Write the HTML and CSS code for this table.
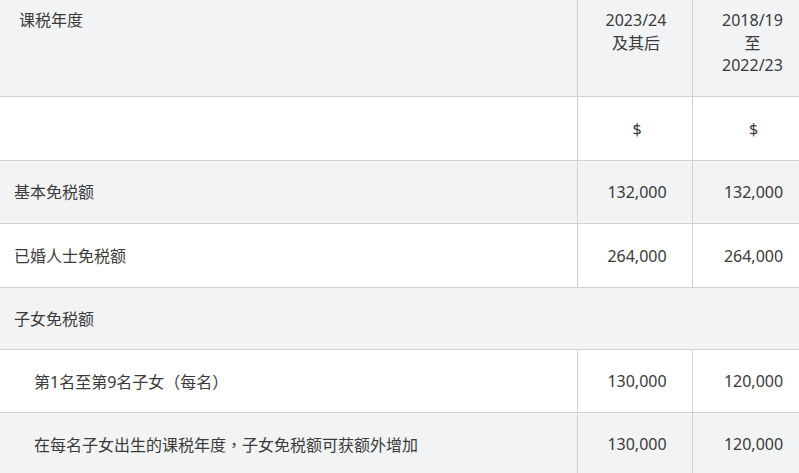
FILE: index.html
```html
<!DOCTYPE html>
<html lang="zh">
<head>
<meta charset="utf-8">
<link rel="stylesheet" href="styles.css">
</head>
<body>
<div class="table">
  <div class="row head grey">
    <div class="cell label head-label">课税年度</div>
    <div class="cell num top">2023/24<br>及其后</div>
    <div class="cell num top">2018/19<br>至<br>2022/23</div>
  </div>
  <div class="row r64">
    <div class="cell label"></div>
    <div class="cell num">$</div>
    <div class="cell num">$</div>
  </div>
  <div class="row r63 grey">
    <div class="cell label">基本免税额</div>
    <div class="cell num">132,000</div>
    <div class="cell num">132,000</div>
  </div>
  <div class="row r64">
    <div class="cell label">已婚人士免税额</div>
    <div class="cell num">264,000</div>
    <div class="cell num">264,000</div>
  </div>
  <div class="row r62 grey span">
    <div class="cell label">子女免税额</div>
  </div>
  <div class="row r63">
    <div class="cell label indent"><span>第1名至第9名子女<span class="punct" lang="zh-TW">（</span>每名<span class="punct" lang="zh-TW">）</span></span></div>
    <div class="cell num">130,000</div>
    <div class="cell num">120,000</div>
  </div>
  <div class="row r63 grey">
    <div class="cell label indent"><span>在每名子女出生的课税年度<span class="punct" lang="zh-TW">，</span>子女免税额可获额外增加</span></div>
    <div class="cell num">130,000</div>
    <div class="cell num">120,000</div>
  </div>
</div>
</body>
</html>
```
FILE: styles.css
```css
html, body {
  margin: 0;
  padding: 0;
  background: #ffffff;
  overflow: hidden;
}
body {
  font-family: "Noto Sans", "Noto Sans CJK SC", sans-serif;
  font-size: 16px;
  color: #3a3a3a;
}
.table {
  width: 810px;
}
.row {
  display: grid;
  grid-template-columns: 577px 115px 118px;
  border-bottom: 1px solid #d2d2d2;
  box-sizing: border-box;
  background: #ffffff;
}
.row.grey {
  background: #f2f3f5;
}
.row.head { height: 97px; }
.r64 { height: 64px; }
.r63 { height: 63px; }
.r62 { height: 62px; }
.row.span {
  grid-template-columns: 1fr;
}
.cell {
  display: flex;
  align-items: center;
  line-height: 22px;
}
.label {
  padding-left: 14px;
}
.indent {
  padding-left: 34px;
}
.punct {
  font-family: "Noto Sans CJK TC", "Noto Sans CJK SC", sans-serif;
}
.head-label {
  align-items: flex-start;
  padding-left: 19px;
  padding-top: 9px;
}
.num {
  border-left: 1px solid #d2d2d2;
  justify-content: center;
  text-align: center;
  padding-left: 4px;
}
.num.top {
  align-items: flex-start;
  padding-top: 9px;
  line-height: 22.5px;
  padding-left: 2px;
}
```
